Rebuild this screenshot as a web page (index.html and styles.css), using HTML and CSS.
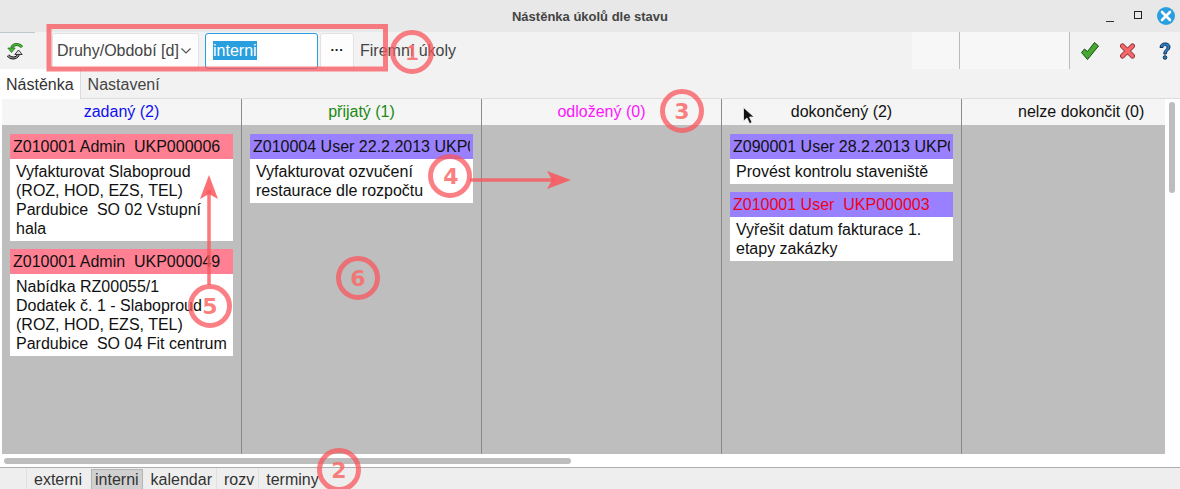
FILE: index.html
```html
<!DOCTYPE html>
<html lang="cs">
<head>
  <meta charset="UTF-8">
  <title>Nástěnka úkolů dle stavu</title>
  <link rel="stylesheet" href="styles.css">
</head>
<body>
  <div class="window">
    <header class="titlebar">
      <span class="title">Nástěnka úkolů dle stavu</span>
      <div class="wm-buttons">
        <span class="wm-min"></span>
        <span class="wm-max"></span>
        <span class="wm-close">
          <svg width="12" height="12" viewBox="0 0 12 12"><path d="M2 2l8 8M10 2l-8 8" stroke="#fff" stroke-width="2.6" stroke-linecap="round"/></svg>
        </span>
      </div>
    </header>

    <div class="toolbar">
      <span class="refresh">
        <svg width="16" height="17" viewBox="0 0 16 17">
          <path d="M15 4C12 .5 6.500 .5 4.500 5" fill="none" stroke="#1e6b14" stroke-width="2.800"/>
          <path d="M15 4C12 .5 6.500 .5 4.500 5" fill="none" stroke="#4cb83a" stroke-width="1.500"/>
          <path d="M.8 5H8.200L4.500 9.500z" fill="#4cb83a" stroke="#1e6b14" stroke-width=".7"/>
          <path d="M1 12.500C4 16 9.500 16 11.500 11.500" fill="none" stroke="#111" stroke-width="2.800"/>
          <path d="M1 12.500C4 16 9.500 16 11.500 11.500" fill="none" stroke="#999" stroke-width="1.200"/>
          <path d="M7.800 11.500H15.200L11.500 7z" fill="#ddd" stroke="#111" stroke-width=".8"/>
        </svg>
      </span>
      <div class="combo">Druhy/Období [d]
        <svg width="12" height="8" viewBox="0 0 12 8"><path d="M1.500 1.500L6 6l4.500-4.500" fill="none" stroke="#555" stroke-width="1.200"/></svg>
      </div>
      <div class="input"><span class="selected">interni</span></div>
      <div class="dots">···</div>
      <span class="tool-label">Firemní úkoly</span>
      <div class="tool-panel">
        <div class="panel-a"></div>
        <div class="panel-b"></div>
      </div>
      <div class="actions">
        <svg class="act-ok" width="18" height="18" viewBox="0 0 18 18"><path d="M.5 10.500L3.500 7 6.500 9.500 13.500.5 17.500 4 6.500 17.500z" fill="#46a832" stroke="#1d4d14" stroke-width="1"/></svg>
        <svg class="act-no" width="15" height="16" viewBox="0 0 15 16"><path d="M2.500 3l10 10M12.500 3l-10 10" stroke="#8a2f35" stroke-width="5" stroke-linecap="round"/><path d="M2.500 3l10 10M12.500 3l-10 10" stroke="#f4686a" stroke-width="3.400" stroke-linecap="round"/></svg>
        <svg class="act-help" width="12" height="18" viewBox="0 0 12 18"><path d="M1 5.500C1-.5 11-.5 11 5c0 3.500-3.800 3.500-3.800 7H4.800c0-4.500 3.200-4 3.200-7 0-2-4-2-4 .5z" fill="#2a7fc4" stroke="#0c2f55" stroke-width="1"/><circle cx="6" cy="15.500" r="1.800" fill="#2a7fc4" stroke="#0c2f55"/></svg>
      </div>
    </div>

    <nav class="tabs">
      <span class="tab active">Nástěnka</span>
      <span class="tab">Nastavení</span>
    </nav>

    <div class="board-wrap">
      <div class="board">
        <section class="col">
          <h2 class="col-head blue">zadaný (2)</h2>
          <div class="col-body">
            <article class="card">
              <div class="card-head pink">Z010001 Admin&nbsp; UKP000006</div>
              <div class="card-text">Vyfakturovat Slaboproud<br>(ROZ, HOD, EZS, TEL)<br>Pardubice&nbsp; SO 02 Vstupní hala</div>
            </article>
            <article class="card">
              <div class="card-head pink">Z010001 Admin&nbsp; UKP000049</div>
              <div class="card-text">Nabídka RZ00055/1<br>Dodatek č. 1 - Slaboproud<br>(ROZ, HOD, EZS, TEL)<br>Pardubice&nbsp; SO 04 Fit centrum</div>
            </article>
          </div>
        </section>
        <section class="col">
          <h2 class="col-head green">přijatý (1)</h2>
          <div class="col-body">
            <article class="card">
              <div class="card-head violet">Z010004 User 22.2.2013 UKP000012</div>
              <div class="card-text">Vyfakturovat ozvučení<br>restaurace dle rozpočtu</div>
            </article>
          </div>
        </section>
        <section class="col">
          <h2 class="col-head magenta">odložený (0)</h2>
          <div class="col-body"></div>
        </section>
        <section class="col">
          <h2 class="col-head">dokončený (2)</h2>
          <div class="col-body">
            <article class="card">
              <div class="card-head violet">Z090001 User 28.2.2013 UKP000008</div>
              <div class="card-text">Provést kontrolu staveniště</div>
            </article>
            <article class="card">
              <div class="card-head violet red-text">Z010001 User&nbsp; UKP000003</div>
              <div class="card-text">Vyřešit datum fakturace 1.<br>etapy zakázky</div>
            </article>
          </div>
        </section>
        <section class="col last">
          <h2 class="col-head">nelze dokončit (0)</h2>
          <div class="col-body"></div>
        </section>
      </div>
      <div class="vscroll"><span class="vthumb"></span></div>
    </div>

    <div class="hscroll"><span class="hthumb"></span></div>

    <footer class="sheets">
      <span class="sheet">externi</span>
      <span class="sheet current">interni</span>
      <span class="sheet plain">kalendar</span>
      <span class="sheet">rozv</span>
      <span class="sheet">terminy</span>
    </footer>
  </div>

  <!-- red notes drawn over the screenshot -->
  <svg class="notes" width="1180" height="489" viewBox="0 0 1180 489">
    <g fill="none" stroke="#fa565d" stroke-opacity=".75" stroke-width="5">
      <rect x="49" y="26.500" width="336.500" height="42.500"/>
      <circle cx="412" cy="52" r="19.500"/>
      <circle cx="339" cy="470" r="19.500"/>
      <circle cx="682" cy="111" r="19.500"/>
      <circle cx="450" cy="176" r="19.500"/>
      <circle cx="210" cy="306" r="19.500"/>
      <circle cx="358" cy="278" r="19.500"/>
    </g>
    <g stroke="#fa565d" stroke-opacity=".8" stroke-width="3.500">
      <path d="M470 180h85"/>
      <path d="M209 285V190"/>
    </g>
    <g fill="#fa565d" fill-opacity=".85">
      <path d="M571 180l-24-9 5 9-5 9z"/>
      <path d="M209 175l-9 24 9-5 9 5z"/>
    </g>
    <g class="note-nums" fill="#fa6a68" fill-opacity=".85" text-anchor="middle">
      <text class="note-one" x="412" y="60">1</text>
      <text x="339" y="478">2</text>
      <text x="682" y="119">3</text>
      <text x="451" y="184">4</text>
      <text x="210" y="314">5</text>
      <text x="358" y="286">6</text>
    </g>
    <path d="M743.500 107.500V121l3.500-3 2.500 5.500 2.500-1-2.500-5.500h4.500z" fill="#111" stroke="#eee" stroke-width=".8"/>
  </svg>
</body>
</html>
```

FILE: styles.css
```css
html, body {
  margin: 0;
  padding: 0;
  height: 489px;
  overflow: hidden;
}
body {
  font-family: "Liberation Sans", Arial, sans-serif;
  font-size: 16px;
  color: #111;
  background: #f2f2f2;
}
.window {
  display: flex;
  flex-direction: column;
  height: 489px;
}
.titlebar {
  height: 32px;
  background: #e8e8e8;
  display: flex;
  align-items: center;
  justify-content: center;
  flex: none;
}
.title {
  font-size: 13px;
  font-weight: bold;
  color: #444;
}
.wm-buttons {
  position: absolute;
  top: 7px;
  right: 5px;
  display: flex;
  align-items: center;
}
.wm-min {
  width: 8px;
  height: 1px;
  background: #333;
  margin-top: 11px;
}
.wm-max {
  width: 6px;
  height: 6px;
  border: 1px solid #222;
  margin-left: 20px;
  margin-top: -2px;
}
.wm-close {
  width: 18px;
  height: 18px;
  border-radius: 50%;
  background: #2a9fe0;
  display: flex;
  align-items: center;
  justify-content: center;
  margin-left: 15px;
}
.toolbar {
  height: 37px;
  flex: none;
  display: flex;
  align-items: center;
  background: linear-gradient(#b9c9cc, #b9c9cc) 0 0 / 35px 1px no-repeat #f2f2f2;
}
.refresh {
  width: 52px;
  padding-left: 7px;
  padding-top: 1px;
  box-sizing: border-box;
  display: flex;
}
.combo {
  width: 147px;
  height: 36px;
  box-sizing: border-box;
  background: #fdfdfd;
  border: 1px solid #e2e2e2;
  border-radius: 3px;
  padding-left: 4px;
  display: flex;
  align-items: center;
  justify-content: space-between;
  padding-right: 6px;
  color: #444;
}
.input {
  width: 113px;
  height: 36px;
  box-sizing: border-box;
  margin-left: 6px;
  background: #fff;
  border: 1px solid #2a9fe0;
  border-radius: 3px;
  padding-left: 7px;
  display: flex;
  align-items: center;
}
.selected {
  background: #2a9fe0;
  color: #fff;
  line-height: 19px;
}
.dots {
  width: 34px;
  height: 36px;
  box-sizing: border-box;
  margin-left: 2px;
  background: #fdfdfd;
  border: 1px solid #e2e2e2;
  border-radius: 3px;
  text-align: center;
  line-height: 32px;
  font-size: 13px;
  font-weight: bold;
  color: #111;
}
.tool-label {
  margin-left: 6px;
  color: #444;
  width: 552px;
}
.tool-panel {
  display: flex;
  height: 37px;
  background: #f7f7f7;
}
.panel-a {
  width: 47px;
  border-right: 1px solid #bbb;
}
.panel-b {
  width: 109px;
  border-right: 1px solid #bbb;
}
.actions {
  display: flex;
  align-items: center;
  padding-left: 11px;
}
.act-no {
  margin-left: 21px;
}
.act-help {
  margin-left: 24px;
}
.tabs {
  height: 30px;
  flex: none;
  display: flex;
  border-bottom: 1px solid #dcdcdc;
  box-sizing: border-box;
}
.tab {
  padding: 7px 6px 0 6px;
  color: #444;
  border-right: 1px solid #dcdcdc;
}
.tab + .tab {
  border-right: 0;
  padding-left: 7px;
}
.tab.active {
  background: #fff;
  color: #333;
  margin-bottom: -1px;
}
.board-wrap {
  flex: 1;
  display: flex;
  min-height: 0;
  padding-left: 2px;
  background: #fff;
}
.board {
  width: 1163px;
  flex: none;
  display: flex;
  overflow: hidden;
}
.col {
  flex: 0 0 240px;
  display: flex;
  flex-direction: column;
  box-sizing: border-box;
  border-right: 1px solid #8a8a8a;
}
.col.last {
  flex-basis: 203px;
  border-right: 0;
}
.col-head {
  margin: 0;
  height: 26px;
  flex: none;
  background: #f5f5f5;
  font-size: 16px;
  font-weight: normal;
  text-align: center;
  line-height: 25px;
}
.col.last .col-head {
  text-align: left;
  padding-left: 56px;
}
.blue { color: #1010f0; }
.green { color: #1a8a10; }
.magenta { color: #ff14ff; }
.col-body {
  flex: 1;
  background: #bebebe;
  padding: 9px 8px 0 8px;
  display: flex;
  flex-direction: column;
  gap: 8px;
}
.card {
  width: 223px;
  background: #fff;
}
.card-head {
  height: 25px;
  line-height: 25px;
  padding: 0 3px;
  overflow: hidden;
  white-space: nowrap;
  box-sizing: border-box;
  border-right: 3px solid transparent;
}
.pink { background: #ff8093; }
.violet { background: #9980ff; }
.red-text { color: #f00018; }
.card-text {
  padding: 3px 6px;
  line-height: 19px;
}
.vscroll {
  flex: 1;
  background: #fff;
  padding: 3px 5px 0 4px;
}
.vthumb {
  display: block;
  width: 6px;
  height: 91px;
  border-radius: 3px;
  background: #bdbdbd;
}
.hscroll {
  height: 14px;
  flex: none;
  background: #fff;
  padding: 4px 0 0 4px;
  box-sizing: border-box;
  border-bottom: 1px solid #a9b0ae;
}
.hthumb {
  display: block;
  width: 567px;
  height: 6px;
  border-radius: 3px;
  background: #bdbdbd;
}
.sheets {
  height: 21px;
  flex: none;
  display: flex;
  padding-left: 26px;
  background: #eee;
  color: #333;
}
.sheet {
  padding: 3px 4px 0 7px;
  border-left: 1px solid #e0e0e0;
}
.sheet.current {
  background: #d0d0d0;
  border: 1px solid #b5b5b5;
  border-bottom: 0;
  padding: 1px 3px 0 3px;
  margin: 1px 0 0 5px;
}
.sheet.plain {
  border-left: 0;
  padding-left: 8px;
}
.notes {
  position: absolute;
  left: 0;
  top: 0;
  pointer-events: none;
}
.note-nums {
  font-family: "DejaVu Sans", sans-serif;
  font-size: 22px;
  font-weight: bold;
}
.note-one {
  font-family: "Liberation Sans", sans-serif;
}
```
